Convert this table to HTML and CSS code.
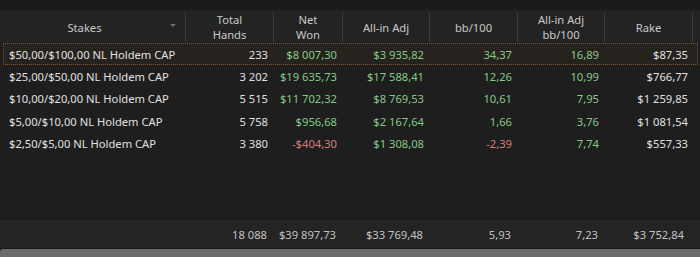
FILE: index.html
```html
<!DOCTYPE html>
<html>
<head>
<meta charset="utf-8">
<link rel="stylesheet" href="styles.css">
</head>
<body>
<div class="app">
  <div class="topband"></div>
  <div class="grid header">
    <div class="hcell stakes"><span>Stakes</span><span class="sort"></span></div>
    <div class="hcell">Total<br>Hands</div>
    <div class="hcell">Net<br>Won</div>
    <div class="hcell">All-in Adj</div>
    <div class="hcell">bb/100</div>
    <div class="hcell">All-in Adj<br>bb/100</div>
    <div class="hcell">Rake</div>
  </div>
  <div class="body">
    <div class="grid row selected">
      <div class="cell name">$50,00/$100,00 NL Holdem CAP</div>
      <div class="cell">233</div>
      <div class="cell pos">$8 007,30</div>
      <div class="cell pos">$3 935,82</div>
      <div class="cell pos">34,37</div>
      <div class="cell pos">16,89</div>
      <div class="cell">$87,35</div>
    </div>
    <div class="grid row">
      <div class="cell name">$25,00/$50,00 NL Holdem CAP</div>
      <div class="cell">3 202</div>
      <div class="cell pos">$19 635,73</div>
      <div class="cell pos">$17 588,41</div>
      <div class="cell pos">12,26</div>
      <div class="cell pos">10,99</div>
      <div class="cell">$766,77</div>
    </div>
    <div class="grid row">
      <div class="cell name">$10,00/$20,00 NL Holdem CAP</div>
      <div class="cell">5 515</div>
      <div class="cell pos">$11 702,32</div>
      <div class="cell pos">$8 769,53</div>
      <div class="cell pos">10,61</div>
      <div class="cell pos">7,95</div>
      <div class="cell">$1 259,85</div>
    </div>
    <div class="grid row">
      <div class="cell name">$5,00/$10,00 NL Holdem CAP</div>
      <div class="cell">5 758</div>
      <div class="cell pos">$956,68</div>
      <div class="cell pos">$2 167,64</div>
      <div class="cell pos">1,66</div>
      <div class="cell pos">3,76</div>
      <div class="cell">$1 081,54</div>
    </div>
    <div class="grid row">
      <div class="cell name">$2,50/$5,00 NL Holdem CAP</div>
      <div class="cell">3 380</div>
      <div class="cell neg">-$404,30</div>
      <div class="cell pos">$1 308,08</div>
      <div class="cell neg">-2,39</div>
      <div class="cell pos">7,74</div>
      <div class="cell">$557,33</div>
    </div>
  </div>
  <div class="grid footer">
    <div class="cell name"></div>
    <div class="cell">18 088</div>
    <div class="cell">$39 897,73</div>
    <div class="cell">$33 769,48</div>
    <div class="cell">5,93</div>
    <div class="cell">7,23</div>
    <div class="cell">$3 752,84</div>
  </div>
  <div class="scrollbar"><div class="thumb"></div></div>
</div>
</body>
</html>
```
FILE: styles.css
```css
html, body {
  margin: 0;
  padding: 0;
  background: #1e1e1e;
}
.app {
  width: 700px;
  height: 257px;
  display: flex;
  flex-direction: column;
  font-family: "Noto Sans", "Open Sans", sans-serif;
  font-size: 11.2px;
  overflow: hidden;
}
.topband {
  height: 10px;
  background: #1b1b1b;
}
.grid {
  display: grid;
  grid-template-columns: 186px 88px 69px 87px 88px 87px 88px 7px;
}
.header {
  height: 32px;
  background: #232323;
  color: #c9c9c9;
}
.hcell {
  display: flex;
  align-items: center;
  justify-content: center;
  text-align: center;
  line-height: 15.4px;
  margin: 2px 0 3px;
  padding-bottom: 2px;
  border-right: 1px solid #3b3b3b;
}
.hcell.stakes {
  position: relative;
  padding-right: 16px;
}
.sort {
  position: absolute;
  right: 9px;
  top: 12px;
  width: 0;
  height: 0;
  border-left: 3px solid transparent;
  border-right: 3px solid transparent;
  border-top: 3px solid #6f6f6f;
}
.body {
  flex: 1;
  padding-top: 1px;
}
.row {
  height: 22.4px;
  color: #e0e0e0;
  box-sizing: border-box;
  border: 1px solid transparent;
  margin: 0 2px 0 3px;
  grid-template-columns: 183px 88px 69px 87px 88px 87px 88px 3px;
}
.row.selected {
  border: 1px dotted #80552f;
  background: #26231f;
}
.cell {
  display: flex;
  align-items: center;
  justify-content: flex-end;
  padding-right: 7px;
  white-space: nowrap;
}
.row .cell:last-child {
  padding-right: 6px;
}
.cell.name {
  justify-content: flex-start;
  padding-left: 5px;
  padding-right: 0;
}
.pos { color: #86c886; }
.neg { color: #d87c7c; }
.footer {
  height: 28px;
  background: #242424;
  color: #c2c2c2;
}
.footer .cell:nth-child(7) {
  padding-right: 9px;
}
.scrollbar {
  height: 9px;
  background: #1a1a1a;
  padding-top: 1px;
  box-sizing: border-box;
}
.thumb {
  height: 100%;
  background: #6b6b6b;
  border-radius: 3px 0 0 0;
}
```
